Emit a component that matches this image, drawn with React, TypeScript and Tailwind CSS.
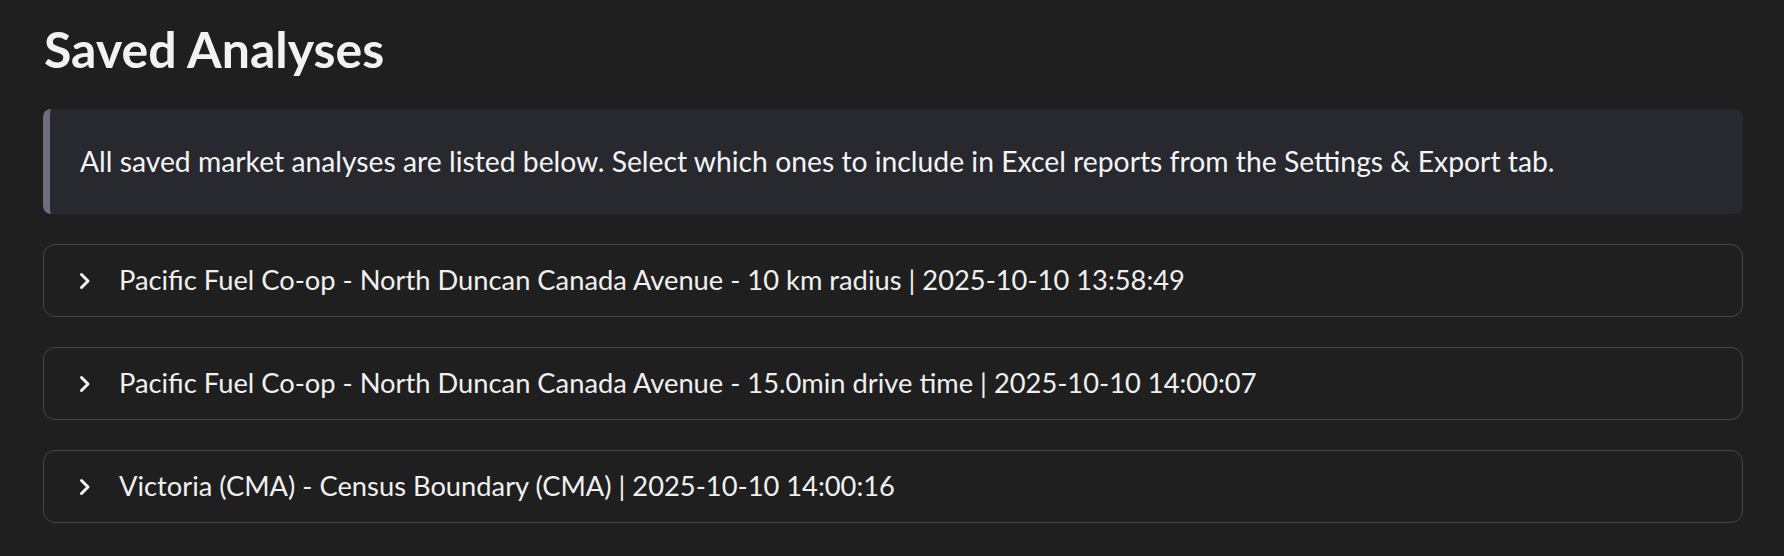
import React from 'react'

const analyses = [
  'Pacific Fuel Co-op - North Duncan Canada Avenue - 10 km radius | 2025-10-10 13:58:49',
  'Pacific Fuel Co-op - North Duncan Canada Avenue - 15.0min drive time | 2025-10-10 14:00:07',
  'Victoria (CMA) - Census Boundary (CMA) | 2025-10-10 14:00:16',
]

const Chevron = () => (
  <svg width="14" height="18" viewBox="0 0 14 18" fill="none" className="shrink-0">
    <polyline points="3.5,2.5 10,9 3.5,15.5" stroke="#f2f2f2" strokeWidth="3" strokeLinecap="round" strokeLinejoin="round" />
  </svg>
)

const Expander = ({label}: {label: string}) => (
  <div className="h-[73px] rounded-[12px] border border-[#464646] flex items-center pl-[34px]">
    <Chevron />
    <span className="ml-[27px] text-[27.3px] text-[#f0f0f0] whitespace-nowrap">{label}</span>
  </div>
)

export default function App() {
  return (
    <div className="min-h-screen bg-[#1f1f1f] pl-[43px] pr-[41px] pt-[19px] font-['Lato',sans-serif]">
      <h1 className="text-[50px] leading-[60px] font-bold text-[#f2f2f2] pl-[1px]">Saved Analyses</h1>
      <div className="mt-[30px] h-[105px] rounded-[8px] border-l-[7px] border-[#6b7080] bg-[#28292f] flex items-center pl-[30px]">
        <p className="text-[28.3px] text-[#f4f4f4] whitespace-nowrap">
          All saved market analyses are listed below. Select which ones to include in Excel reports from the Settings &amp; Export tab.
        </p>
      </div>
      <div className="mt-[30px] flex flex-col gap-[30px]">
        {analyses.map(item => (
          <Expander key={item} label={item} />
        ))}
      </div>
    </div>
  )
}
